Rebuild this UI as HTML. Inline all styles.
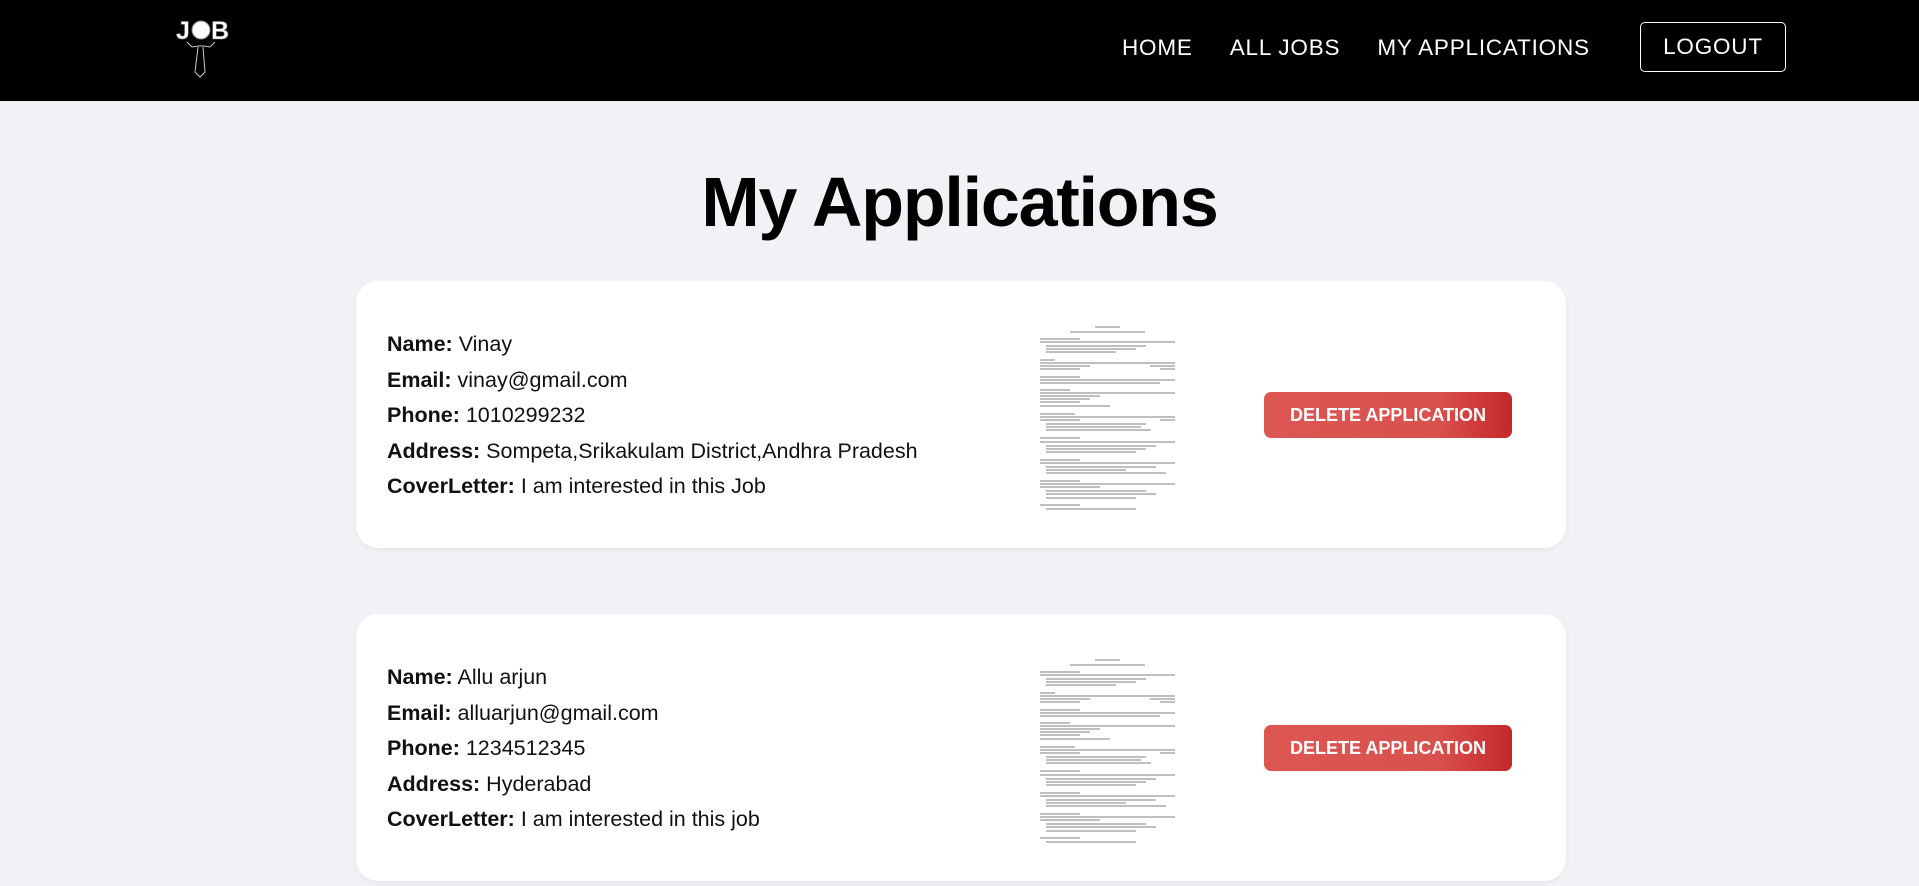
<!DOCTYPE html>
<html><head><meta charset="utf-8"><style>
*{margin:0;padding:0;box-sizing:border-box}
body{width:1919px;height:886px;overflow:hidden;background:#f0f2f5;font-family:"Liberation Sans",Arial,sans-serif;color:#111}
.nav{height:101px;background:#000;position:relative}
.logo{position:absolute;left:176px;top:14px}
.links{position:absolute;top:0;left:1122px;height:96px;display:flex;align-items:center;color:#fff;font-size:22.5px;letter-spacing:.8px}
.links span{margin-right:37px}
.btn{position:absolute;left:1640px;top:22px;width:146px;height:50px;border:1px solid #fff;border-radius:5px;color:#fff;font-size:22.5px;display:flex;align-items:center;justify-content:center;letter-spacing:.8px}
h1{position:absolute;top:162px;left:0;width:1919px;text-align:center;font-size:70px;letter-spacing:-1.2px;font-weight:bold;color:#000}
.card{position:absolute;left:356px;width:1210px;height:267px;background:#fff;border-radius:22px;box-shadow:0 2px 6px rgba(0,0,0,.05)}
.info{position:absolute;left:31px;font-size:21.5px;line-height:35.6px;color:#111}
.info b{font-weight:bold}
.thumb{position:absolute;left:654px;top:34px;width:196px;height:200px;background:#fff}
.del{position:absolute;left:908px;width:248px;height:46px;border-radius:7px;background:linear-gradient(90deg,#dc5652 0%,#d9514e 70%,#c4282a 100%);color:#fff;font-weight:bold;font-size:18px;display:flex;align-items:center;justify-content:center}
</style></head><body>
<div class="nav">
<svg class="logo" width="56" height="64" viewBox="0 0 56 64">
<text x="0" y="25" fill="#fff" stroke="#888" stroke-width=".6" font-family="Liberation Sans" font-weight="bold" font-size="25">J</text>
<circle cx="25" cy="16" r="9" fill="#fff" stroke="#888"/>
<text x="35" y="25" fill="#fff" stroke="#888" stroke-width=".6" font-family="Liberation Sans" font-weight="bold" font-size="25">B</text>
<path d="M11 28 L16 33 L22 32 L28 32 L34 33 L39 28 M22 33 L19 58 L24 63 L29 58 L27 33" fill="none" stroke="#ccc" stroke-width="1"/>
</svg>
<div class="links"><span>HOME</span><span>ALL JOBS</span><span>MY APPLICATIONS</span></div>
<div class="btn">LOGOUT</div>
</div>
<h1>My Applications</h1>

<div class="card" style="top:281px">
<div class="info" style="top:46px"><div><b>Name:</b> Vinay</div><div><b>Email:</b> vinay@gmail.com</div><div><b>Phone:</b> 1010299232</div><div><b>Address:</b> Sompeta,Srikakulam District,Andhra Pradesh</div><div><b>CoverLetter:</b> I am interested in this Job</div></div>
<svg class="thumb" viewBox="0 0 196 200"><g stroke="#999" stroke-width="1.2">
<path d="M85 12h25M60 17h75M30 24h40M30 27h135M36 31h100M36 34h90M36 37h70M30 45h15M30 48h135M30 51h50M140 51h25M30 54h40M150 54h15M30 62h40M30 65h135M30 68h120M30 75h30M30 78h135M30 81h60M30 84h50M30 87h40M30 91h70M30 99h35M30 102h135M30 105h40M150 105h15M36 109h100M36 112h95M36 115h105M30 123h40M30 127h135M36 131h110M36 134h100M36 137h90M30 145h40M30 148h135M36 152h110M36 155h80M36 158h120M30 166h40M30 169h135M30 172h60M36 176h100M36 179h110M36 183h90M30 190h40M36 194h90"/></g></svg>
<div class="del" style="top:111px">DELETE APPLICATION</div>
</div>

<div class="card" style="top:614px">
<div class="info" style="top:46px"><div><b>Name:</b> Allu arjun</div><div><b>Email:</b> alluarjun@gmail.com</div><div><b>Phone:</b> 1234512345</div><div><b>Address:</b> Hyderabad</div><div><b>CoverLetter:</b> I am interested in this job</div></div>
<svg class="thumb" viewBox="0 0 196 200"><g stroke="#999" stroke-width="1.2">
<path d="M85 12h25M60 17h75M30 24h40M30 27h135M36 31h100M36 34h90M36 37h70M30 45h15M30 48h135M30 51h50M140 51h25M30 54h40M150 54h15M30 62h40M30 65h135M30 68h120M30 75h30M30 78h135M30 81h60M30 84h50M30 87h40M30 91h70M30 99h35M30 102h135M30 105h40M150 105h15M36 109h100M36 112h95M36 115h105M30 123h40M30 127h135M36 131h110M36 134h100M36 137h90M30 145h40M30 148h135M36 152h110M36 155h80M36 158h120M30 166h40M30 169h135M30 172h60M36 176h100M36 179h110M36 183h90M30 190h40M36 194h90"/></g></svg>
<div class="del" style="top:111px">DELETE APPLICATION</div>
</div>
</body></html>
